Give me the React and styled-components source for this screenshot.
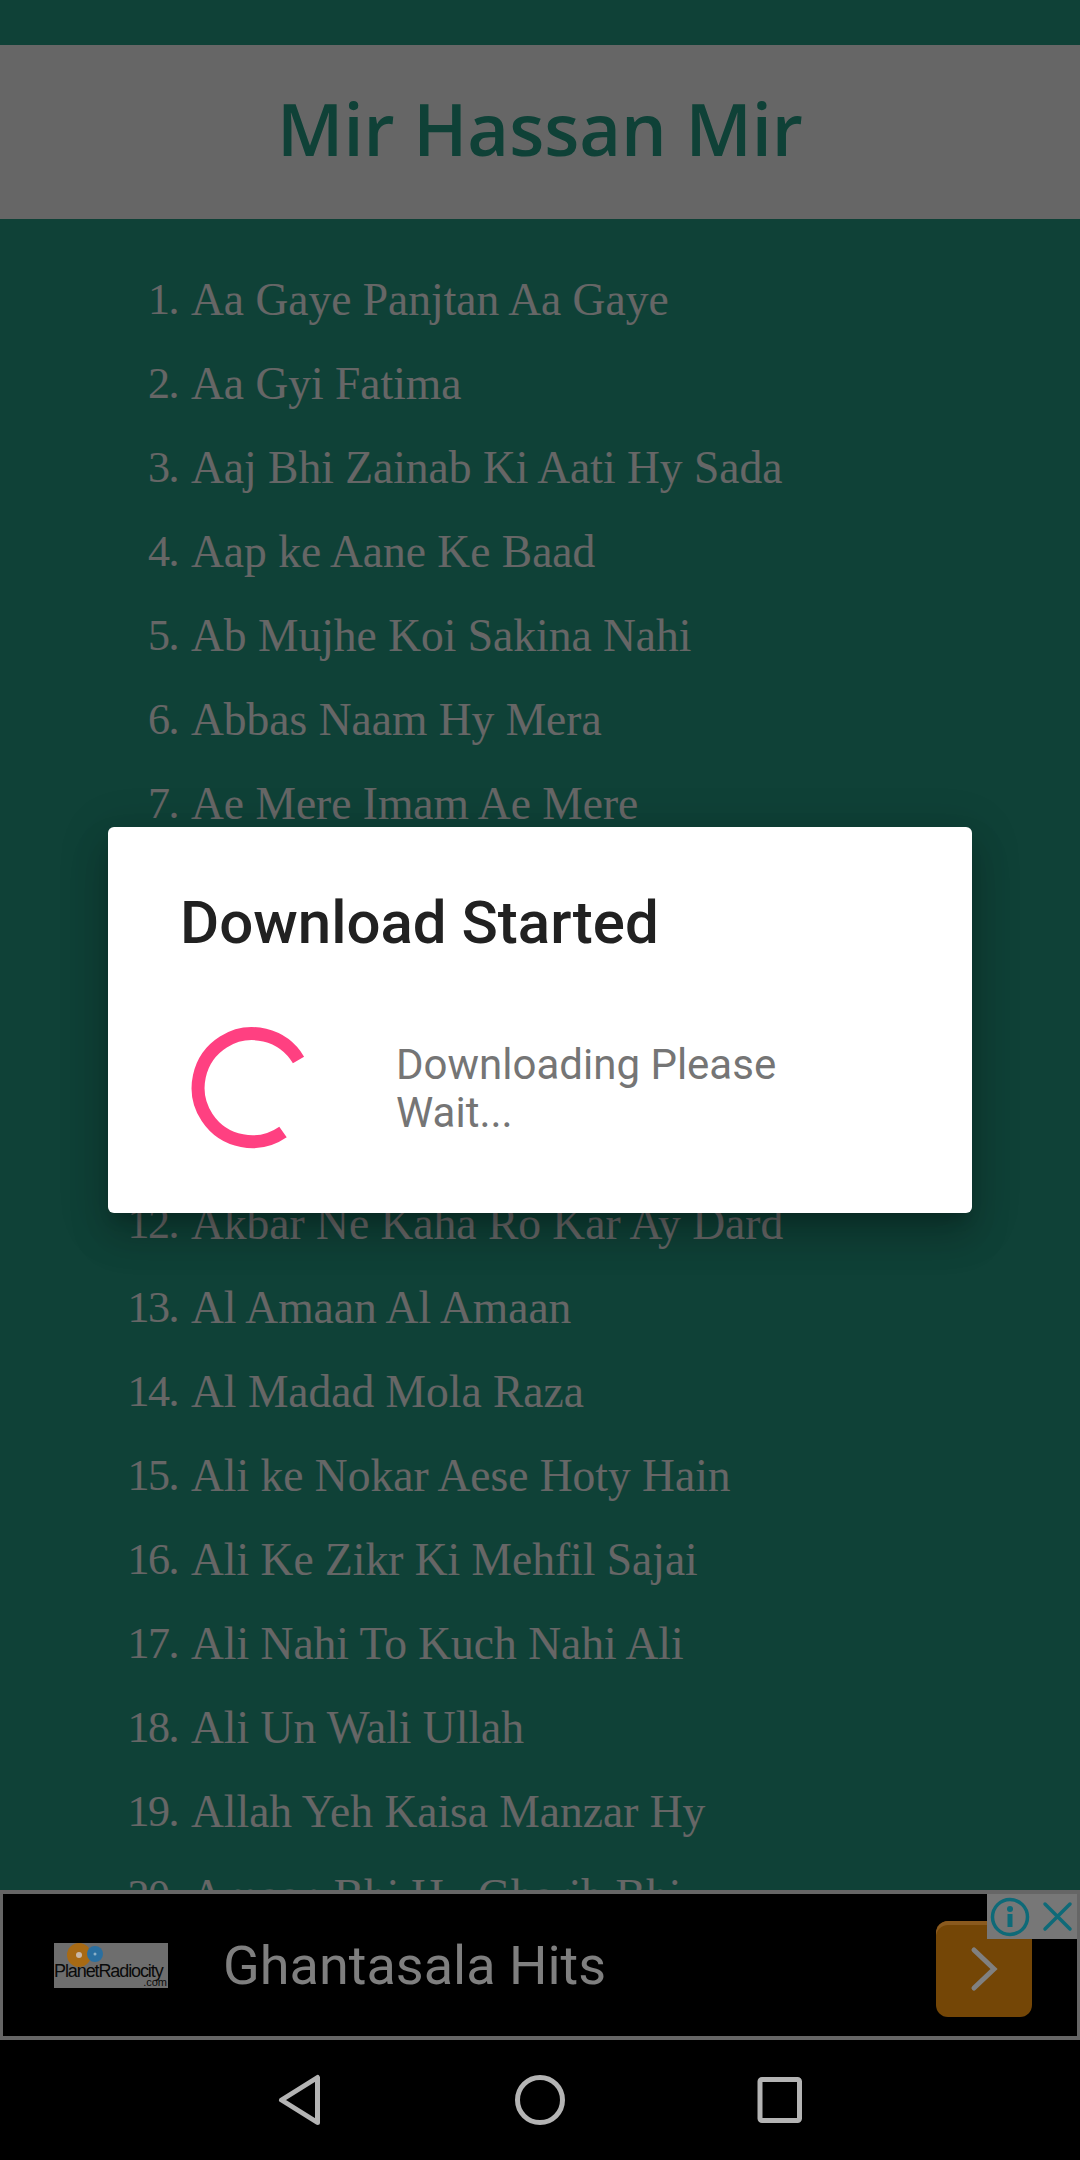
import React from 'react';
import styled, { createGlobalStyle } from 'styled-components';

const GlobalStyle = createGlobalStyle`
    html, body {
        margin: 0;
        padding: 0;
        background: #000;
    }
`;

const songs = [
    'Aa Gaye Panjtan Aa Gaye',
    'Aa Gyi Fatima',
    'Aaj Bhi Zainab Ki Aati Hy Sada',
    'Aap ke Aane Ke Baad',
    'Ab Mujhe Koi Sakina Nahi',
    'Abbas Naam Hy Mera',
    'Ae Mere Imam Ae Mere',
    '',
    '',
    '',
    '',
    'Akbar Ne Kaha Ro Kar Ay Dard',
    'Al Amaan Al Amaan',
    'Al Madad Mola Raza',
    'Ali ke Nokar Aese Hoty Hain',
    'Ali Ke Zikr Ki Mehfil Sajai',
    'Ali Nahi To Kuch Nahi Ali',
    'Ali Un Wali Ullah',
    'Allah Yeh Kaisa Manzar Hy',
    'Amaan Bhi Hy Gharib Bhi'
];

const Page = styled.div`
    width: 1080px;
    height: 2160px;
    display: flex;
    flex-direction: column;
    overflow: hidden;
    background: #000;
`;
const Screen = styled.div`
    position: relative;
    height: 2040px;
    display: flex;
    flex-direction: column;
    background: #26a38a;
`;
const Header = styled.header`
    margin-top: 45px;
    height: 174px;
    flex: none;
    box-sizing: border-box;
    padding-bottom: 8px;
    display: flex;
    align-items: center;
    justify-content: center;
    background: #fff;
`;
const Title = styled.h1`
    margin: 0;
    font: 600 72px 'Open Sans', sans-serif;
    color: #26a38a;
`;
const SongList = styled.ol`
    flex: 1;
    min-height: 0;
    overflow: hidden;
    margin: 0;
    padding: 38px 0 0;
    list-style: none;
`;
const SongRow = styled.li`
    height: 84px;
    display: flex;
    align-items: center;
    font: 400 45.5px 'Liberation Serif', serif;
    color: #fff;
`;
const SongNumber = styled.span`
    width: 178px;
    flex: none;
    text-align: right;
    font-size: 44px;
    letter-spacing: -1.5px;
`;
const SongName = styled.span`
    margin-left: 13px;
`;
// the ad sits in its own window and keeps its dimmed colours above the scrim
const AdBanner = styled.div`
    position: relative;
    z-index: 1;
    height: 150px;
    flex: none;
    box-sizing: border-box;
    display: flex;
    align-items: center;
    padding: 0 0 0 51px;
    border: 4px solid #666;
    border-left-width: 3px;
    border-right-width: 3px;
    background: #000;
`;
const AdLogo = styled.div`
    width: 114px;
    height: 45px;
    flex: none;
    position: relative;
    background: #6e6e6e;
    overflow: hidden;
    font-family: 'Liberation Sans', sans-serif;
`;
const LogoDiscs = styled.svg`
    position: absolute;
    left: 0;
    top: 0;
`;
const LogoName = styled.div`
    position: absolute;
    left: 0;
    top: 20px;
    font-size: 18px;
    letter-spacing: -1.1px;
    line-height: 16px;
    color: #0a0a0a;
    white-space: nowrap;
`;
const LogoDomain = styled.div`
    position: absolute;
    right: 1px;
    top: 34px;
    font-size: 11px;
    line-height: 11px;
    color: #0a0a0a;
`;
const AdText = styled.div`
    margin-left: 55px;
    font: 400 54px Roboto, sans-serif;
    color: #7f7f7f;
`;
const AdButton = styled.div`
    position: absolute;
    right: 45px;
    top: 27px;
    width: 96px;
    height: 96px;
    display: flex;
    align-items: center;
    justify-content: center;
    border-radius: 12px;
    background: #744606;
    box-shadow: inset 0 4px 0 #8a5a1e;
`;
const AdChoices = styled.div`
    position: absolute;
    right: 0;
    top: 0;
    width: 90px;
    height: 45px;
    display: flex;
    align-items: center;
    justify-content: space-between;
    padding: 0 3px;
    box-sizing: border-box;
    background: #777;
`;
const Scrim = styled.div`
    position: absolute;
    inset: 0;
    display: flex;
    align-items: center;
    justify-content: center;
    background: rgba(0, 0, 0, 0.6);
`;
const Dialog = styled.div`
    width: 864px;
    height: 386px;
    box-sizing: border-box;
    padding: 63px 72px 0;
    border-radius: 6px;
    background: #fff;
    box-shadow: 0 24px 38px 3px rgba(0, 0, 0, 0.14), 0 9px 46px 8px rgba(0, 0, 0, 0.12), 0 11px 15px -7px rgba(0, 0, 0, 0.2);
`;
const DialogTitle = styled.h2`
    margin: 0;
    font: 500 60px/66px Roboto, sans-serif;
    color: #212121;
`;
const DialogBody = styled.div`
    display: flex;
    align-items: center;
    margin-top: 71px;
`;
const Spinner = styled.svg`
    flex: none;
    margin-left: 11px;
`;
const DialogMessage = styled.p`
    width: 420px;
    margin: 2px 0 0 83px;
    font: 400 42px/48px Roboto, sans-serif;
    color: #757575;
`;
const NavBar = styled.nav`
    height: 120px;
    flex: none;
    background: #000;
`;
const NavIcons = styled.svg`
    display: block;
`;

const App = () => (
    <Page>
        <GlobalStyle />
        <Screen>
            <Header>
                <Title>Mir Hassan Mir</Title>
            </Header>
            <SongList>
                {songs.map((song, i) => (
                    <SongRow key={i}>
                        <SongNumber>{i + 1}.</SongNumber>
                        <SongName>{song}</SongName>
                    </SongRow>
                ))}
            </SongList>
            <AdBanner>
                <AdLogo>
                    <LogoDiscs width="114" height="45" viewBox="0 0 114 45">
                        <circle cx="25" cy="12" r="12" fill="#a86a14" />
                        <circle cx="25" cy="12" r="3" fill="#c8b8a8" />
                        <circle cx="41" cy="11" r="8" fill="#2a6fa0" />
                        <circle cx="41" cy="11" r="1.5" fill="#8ab0c8" />
                    </LogoDiscs>
                    <LogoName>PlanetRadiocity</LogoName>
                    <LogoDomain>.com</LogoDomain>
                </AdLogo>
                <AdText>Ghantasala Hits</AdText>
                <AdButton>
                    <svg width="30" height="46" viewBox="0 0 30 46">
                        <path d="M5 4 L25 23 L5 42" fill="none" stroke="#808080" strokeWidth="5" strokeLinecap="round" />
                    </svg>
                </AdButton>
                <AdChoices>
                    <svg width="40" height="40" viewBox="0 0 40 40">
                        <circle cx="20" cy="20" r="17.5" fill="none" stroke="#0e6a78" strokeWidth="3.5" />
                        <circle cx="20" cy="12" r="3" fill="#0e6a78" />
                        <rect x="17.5" y="17" width="5" height="13" fill="#0e6a78" />
                    </svg>
                    <svg width="33" height="33" viewBox="0 0 33 33">
                        <path d="M4 4 L29 29 M29 4 L4 29" fill="none" stroke="#0e6a78" strokeWidth="3.5" strokeLinecap="round" />
                    </svg>
                </AdChoices>
            </AdBanner>
            <Scrim>
                <Dialog>
                    <DialogTitle>Download Started</DialogTitle>
                    <DialogBody>
                        <Spinner width="122" height="122" viewBox="0 0 122 122">
                            <path d="M 107.5 33 A 54 54 0 1 0 92 105" fill="none" stroke="#ff4081" strokeWidth="13" />
                        </Spinner>
                        <DialogMessage>Downloading Please Wait...</DialogMessage>
                    </DialogBody>
                </Dialog>
            </Scrim>
        </Screen>
        <NavBar>
            <NavIcons width="1080" height="120" viewBox="0 0 1080 120">
                <path d="M317.5 37.5 L317.5 82.5 L281.5 60 Z" fill="none" stroke="#b4b4b4" strokeWidth="5" strokeLinejoin="round" />
                <circle cx="540" cy="60" r="22.5" fill="none" stroke="#b4b4b4" strokeWidth="5" />
                <rect x="760" y="39.5" width="39.5" height="41" rx="2" fill="none" stroke="#b4b4b4" strokeWidth="5" />
            </NavIcons>
        </NavBar>
    </Page>
);

export default App;
